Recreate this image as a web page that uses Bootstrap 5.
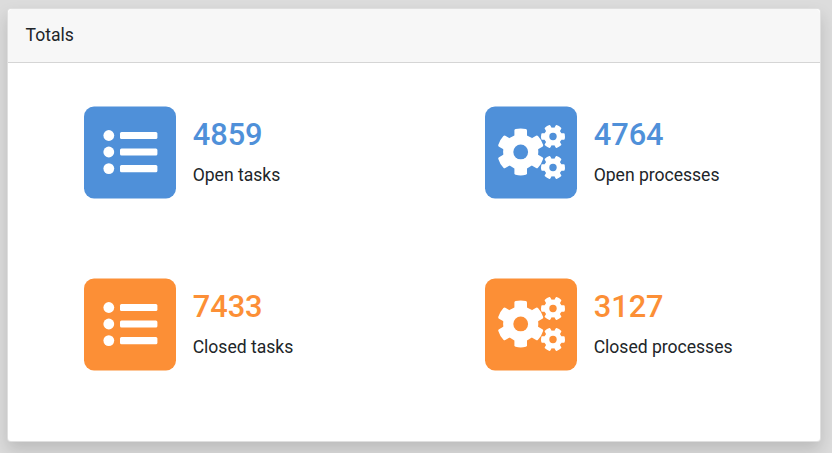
<!DOCTYPE html>
<html lang="en">
<head>
<meta charset="utf-8">
<meta name="viewport" content="width=device-width, initial-scale=1">
<title>Totals</title>
<link href="https://cdn.jsdelivr.net/npm/bootstrap@5.3.0/dist/css/bootstrap.min.css" rel="stylesheet">
<style>
body{background:#dcdcdc;font-family:Roboto,"Liberation Sans",sans-serif;font-size:17.6px;line-height:27px;letter-spacing:-.03px;color:#212529;height:453px;overflow:hidden}
.totals-card{width:814px;height:434px;margin:8px 0 0 7px;border:1px solid rgba(0,0,0,.125);border-radius:4px;box-shadow:0 8px 16px rgba(0,0,0,.15)}
.totals-head{flex:none;height:54px;padding:13px 17.6px 12px;background:#f7f7f7;border-bottom:1px solid #d5d5d5}
.totals-body{padding:43px 0 0 76px}
.totals-grid{display:grid;grid-template-columns:401px 1fr;grid-auto-rows:172px}
.tile{width:92px;height:93px;flex:none;color:#4f90d9}
.tile svg{display:block;width:92px;height:93px}
.stat{margin-left:16.7px;padding-top:10px}
.stat-num{font-size:30.8px;line-height:37px;font-weight:500;color:#4f90d9;margin-bottom:9px}
.closed .tile{color:#fc8f36}
.closed .stat-num{color:#fc8f36}
</style>
</head>
<body>
<svg class="d-none" aria-hidden="true">
  <symbol id="list" viewBox="0 -.5 92 93">
    <rect width="92" height="92" rx="10" fill="currentColor"/>
    <g fill="#fff"><circle cx="24.8" cy="29" r="5.4"/><circle cx="24.8" cy="45.5" r="5.4"/><circle cx="24.8" cy="62.1" r="5.4"/>
    <rect x="36" y="25.4" width="37.4" height="7.2" rx="1.5"/><rect x="36" y="41.9" width="37.4" height="7.2" rx="1.5"/><rect x="36" y="58.5" width="37.4" height="7.2" rx="1.5"/></g>
  </symbol>
  <symbol id="gears" viewBox="0 -.5 92 93">
    <defs><g id="gear"><circle r="17.6"/><path id="bar" d="M-6.3-21.4Q-6.3-22.6-5.1-22.9Q0-24.1 5.1-22.9Q6.3-22.6 6.3-21.4V21.4Q6.3 22.6 5.1 22.9Q0 24.1-5.1 22.9Q-6.3 22.6-6.3 21.4Z"/><use href="#bar" transform="rotate(60)"/><use href="#bar" transform="rotate(-60)"/></g></defs>
    <rect width="92" height="92" rx="10" fill="currentColor"/>
    <g fill="#fff"><use href="#gear" transform="translate(35.7 45.4)"/><use href="#gear" transform="translate(68 30) rotate(90) scale(.51)"/><use href="#gear" transform="translate(68 61) rotate(90) scale(.51)"/></g>
    <g fill="currentColor"><circle cx="35.7" cy="45.4" r="7.4"/><circle cx="68" cy="30" r="3.7"/><circle cx="68" cy="61" r="3.7"/></g>
  </symbol>
</svg>
<div class="card totals-card">
  <div class="card-header totals-head">Totals</div>
  <div class="card-body totals-body">
    <div class="totals-grid">
      <div class="d-flex align-items-start"><div class="tile"><svg><use href="#list"/></svg></div><div class="stat"><div class="stat-num">4859</div><div>Open tasks</div></div></div>
      <div class="d-flex align-items-start"><div class="tile"><svg><use href="#gears"/></svg></div><div class="stat"><div class="stat-num">4764</div><div>Open processes</div></div></div>
      <div class="d-flex align-items-start closed"><div class="tile"><svg><use href="#list"/></svg></div><div class="stat"><div class="stat-num">7433</div><div>Closed tasks</div></div></div>
      <div class="d-flex align-items-start closed"><div class="tile"><svg><use href="#gears"/></svg></div><div class="stat"><div class="stat-num">3127</div><div>Closed processes</div></div></div>
    </div>
  </div>
</div>
<script src="https://cdn.jsdelivr.net/npm/bootstrap@5.3.0/dist/js/bootstrap.bundle.min.js"></script>
</body>
</html>
